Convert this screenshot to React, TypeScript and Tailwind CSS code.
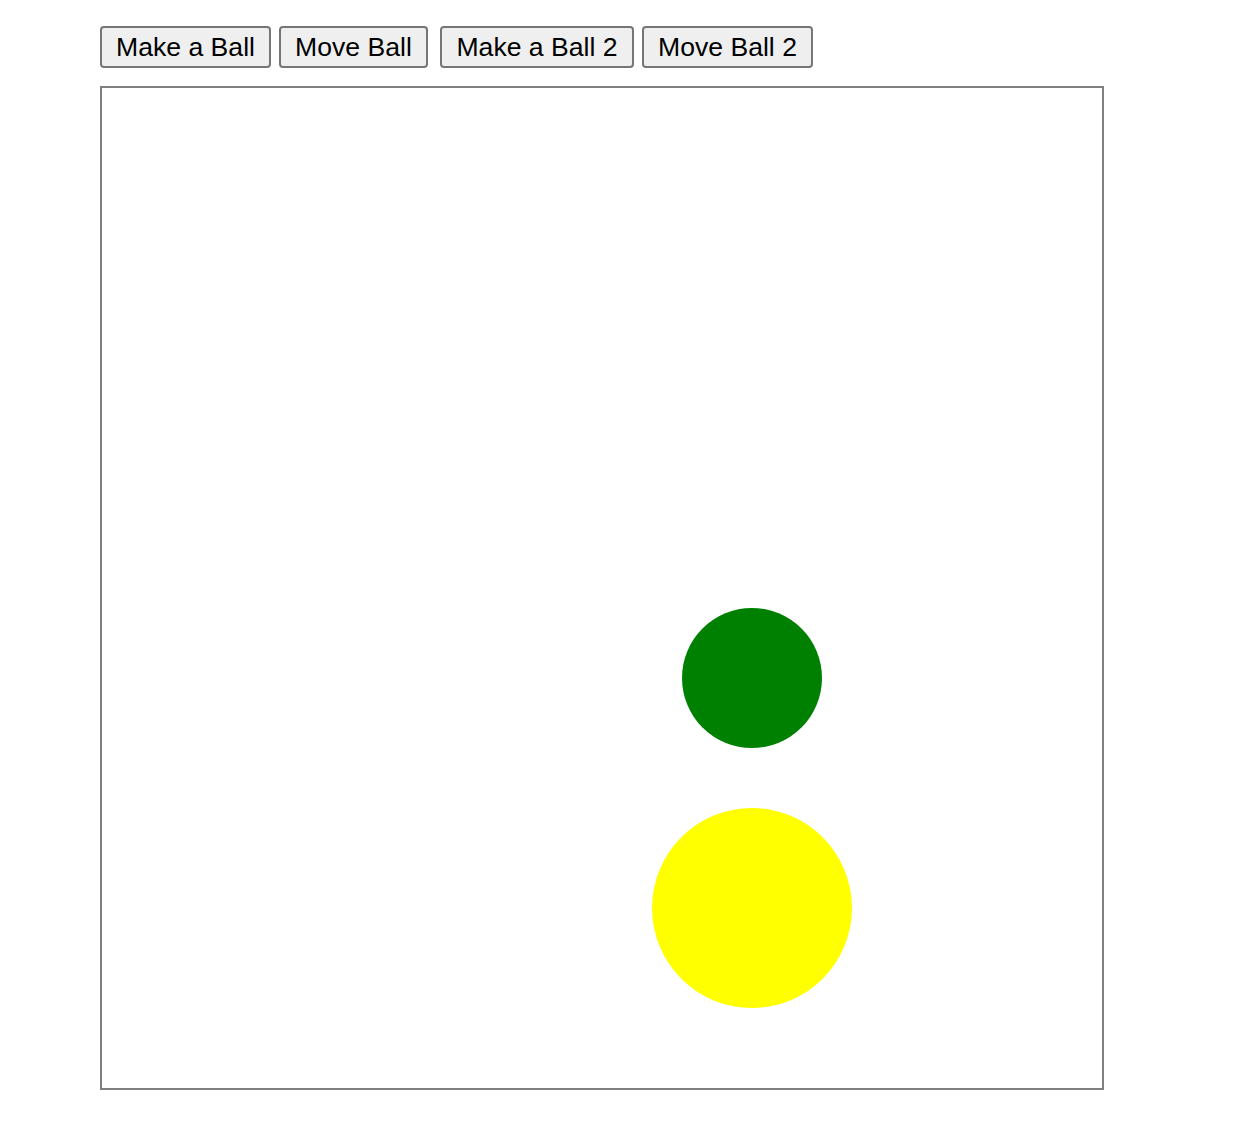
const btn =
  "h-[42px] px-[13px] bg-[#efefef] border-2 border-[#767676] rounded-[4px] text-[26.6px] leading-[30px] text-black font-['Liberation_Sans',Arial,sans-serif]";

export default function App() {
  return (
    <div className="pl-[100px] pt-[26px] bg-white min-h-[1142px] font-['Liberation_Sans',Arial,sans-serif]">
      {/* controls */}
      <div className="flex items-center">
        <button className={`${btn} w-[171px]`}>Make a Ball</button>
        <button className={`${btn} w-[149px] ml-[8px]`}>Move Ball</button>
        <button className={`${btn} w-[194px] ml-[12px]`}>Make a Ball 2</button>
        <button className={`${btn} w-[171px] ml-[8px]`}>Move Ball 2</button>
      </div>

      {/* canvas */}
      <div className="relative mt-[18px] w-[1004px] h-[1004px] border-2 border-[#808080] bg-white">
        <div className="absolute left-[580px] top-[520px] w-[140px] h-[140px] rounded-full bg-[#008000]" />
        <div className="absolute left-[550px] top-[720px] w-[200px] h-[200px] rounded-full bg-[#ffff00]" />
      </div>
    </div>
  );
}
